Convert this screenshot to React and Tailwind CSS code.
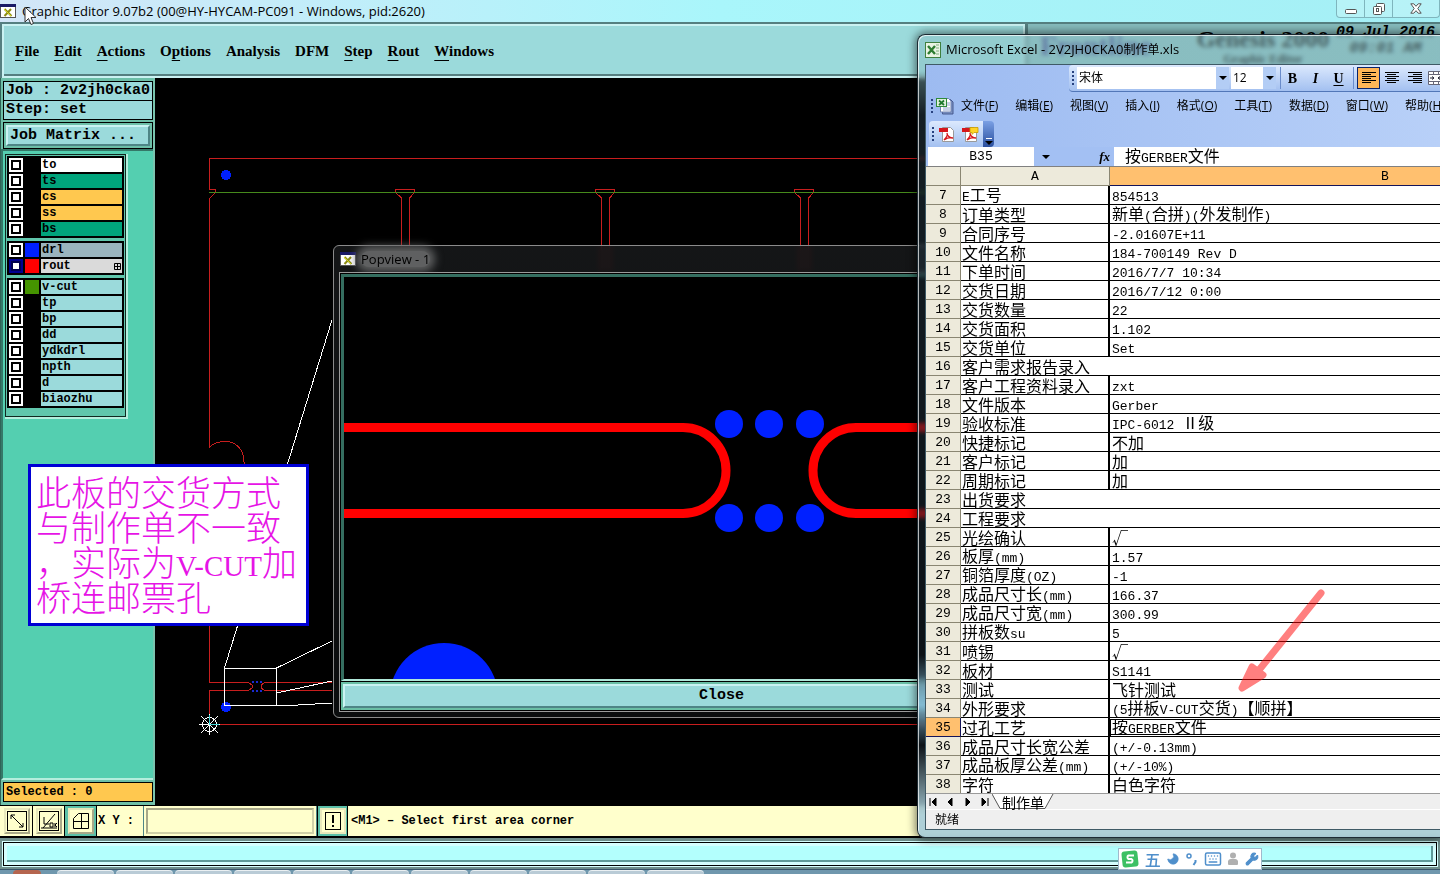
import React from 'react';
import { Moon, Wrench, Keyboard } from 'lucide-react';

const uiFont = "font-['Open_Sans','Noto_Sans_CJK_SC',sans-serif]";
const monoFont = "font-['Liberation_Mono',monospace]";
const sheetFont = "font-['Noto_Sans_CJK_SC',sans-serif]";

const menus = [
  ['', 'F', 'ile'],
  ['', 'E', 'dit'],
  ['', 'A', 'ctions'],
  ['O', 'p', 'tions'],
  ['Analysis', '', ''],
  ['DFM', '', ''],
  ['', 'S', 'tep'],
  ['', 'R', 'out'],
  ['', 'W', 'indows'],
];

const layerGroups = [
  [
    { name: 'to', bg: 'bg-white' },
    { name: 'ts', bg: 'bg-[#00a47c]' },
    { name: 'cs', bg: 'bg-[#ffc84f]' },
    { name: 'ss', bg: 'bg-[#ffc84f]' },
    { name: 'bs', bg: 'bg-[#00a47c]' },
  ],
  [
    { name: 'drl', bg: 'bg-[#9ab4be]', swatch: 'bg-[#0020ff]' },
    { name: 'rout', bg: 'bg-[#dadada]', swatch: 'bg-[#ff0000]', work: true },
  ],
  [
    { name: 'v-cut', bg: 'bg-[#9bdadb]', swatch: 'bg-[#459400]' },
    { name: 'tp', bg: 'bg-[#9bdadb]' },
    { name: 'bp', bg: 'bg-[#9bdadb]' },
    { name: 'dd', bg: 'bg-[#9bdadb]' },
    { name: 'ydkdrl', bg: 'bg-[#9bdadb]' },
    { name: 'npth', bg: 'bg-[#9bdadb]' },
    { name: 'd', bg: 'bg-[#9bdadb]' },
    { name: 'biaozhu', bg: 'bg-[#9bdadb]' },
  ],
];

const rows = [
  [7, 'E工号', '854513'],
  [8, '订单类型', '新单(合拼)(外发制作)'],
  [9, '合同序号', '-2.01607E+11'],
  [10, '文件名称', '184-700149 Rev D'],
  [11, '下单时间', '2016/7/7 10:34'],
  [12, '交货日期', '2016/7/12 0:00'],
  [13, '交货数量', '22'],
  [14, '交货面积', '1.102'],
  [15, '交货单位', 'Set'],
  [16, '客户需求报告录入', null],
  [17, '客户工程资料录入', 'zxt'],
  [18, '文件版本', 'Gerber'],
  [19, '验收标准', 'IPC-6012 Ⅱ级'],
  [20, '快捷标记', '不加'],
  [21, '客户标记', '加'],
  [22, '周期标记', '加'],
  [23, '出货要求', null],
  [24, '工程要求', null],
  [25, '光绘确认', '√'],
  [26, '板厚(mm)', '1.57'],
  [27, '铜箔厚度(OZ)', '-1'],
  [28, '成品尺寸长(mm)', '166.37'],
  [29, '成品尺寸宽(mm)', '300.99'],
  [30, '拼板数su', '5'],
  [31, '喷锡', '√'],
  [32, '板材', 'S1141'],
  [33, '测试', '飞针测试'],
  [34, '外形要求', '(5拼板V-CUT交货)【顺拼】'],
  [35, '过孔工艺', '按GERBER文件'],
  [36, '成品尺寸长宽公差', '(+/-0.13mm)'],
  [37, '成品板厚公差(mm)', '(+/-10%)'],
  [38, '字符', '白色字符'],
];

const excelMenus = [
  ['文件', 'F'],
  ['编辑', 'E'],
  ['视图', 'V'],
  ['插入', 'I'],
  ['格式', 'O'],
  ['工具', 'T'],
  ['数据', 'D'],
  ['窗口', 'W'],
  ['帮助', 'H'],
];

// Half-width runs get a Latin face at about half the width of a CJK glyph.
const Mixed = ({ text, latin = "font-['Liberation_Mono',monospace] text-[13px] leading-none" }) =>
  text.split(/([\x20-\x7e]+)/).map((part, i) =>
    /^[\x20-\x7e]+$/.test(part) ? <span key={i} className={latin}>{part}</span> : part
  );

const XIcon = () => (
  <svg width="16" height="14" viewBox="0 0 16 14" className="shrink-0" aria-hidden="true">
    <rect x="0.5" y="0.5" width="15" height="13" fill="#fff" stroke="#555" />
    <rect x="0" y="0" width="16" height="3" fill="#1a1a66" />
    <path d="M4.5 5 L11.5 12 M11 5 L4.5 12" stroke="#8c8c14" strokeWidth="2" />
    <path d="M4 5 L11 12" stroke="#d8d820" strokeWidth="1" />
  </svg>
);

const ExcelIcon = () => (
  <svg width="16" height="16" viewBox="0 0 16 16" className="shrink-0" aria-hidden="true">
    <rect x="0.5" y="0.5" width="15" height="15" fill="#e9f3e4" stroke="#3f7f3f" />
    <path d="M11 3h3M11 6h3M11 9h3M11 12h3" stroke="#7fae7f" />
    <path d="M3 4l7 8M10 4l-7 8" stroke="#2e7d32" strokeWidth="2.4" />
  </svg>
);

const WorkbookIcon = () => (
  <svg width="18" height="18" viewBox="0 0 18 18" className="shrink-0" aria-hidden="true">
    <path d="M6.5 2.500h8l2.500 2.500v12h-10.500z" fill="#7f95c4" stroke="#46598f" />
    <path d="M4.500 1.500h8l2.500 2.500v11h-10.500z" fill="#fff" stroke="#6a7fb0" />
    <path d="M11 6h3M11 8h3M7 11h7M7 13h7" stroke="#8fa3cf" />
    <rect x="0.500" y="1.500" width="10" height="8" fill="#dff0dc" stroke="#2f8a3a" />
    <path d="M3 3.500l5 4.500M8 3.500l-5 4.500" stroke="#1f7a2c" strokeWidth="1.700" />
  </svg>
);

const PdfIcon = ({ note }) => (
  <svg width="17" height="17" viewBox="0 0 17 17" className="shrink-0" aria-hidden="true">
    <path d="M3.5 1.5h8l3 3v11h-11z" fill="#fff" stroke="#999" />
    <rect x="0" y="2" width="9" height="4" fill="#d6161b" />
    <path d="M5 14c2-2 4-5 3-7 0 3 3 5 6 5-3-1-6 0-9 2z" fill="none" stroke="#d6161b" strokeWidth="1.3" />
    {note && <path d="M8 1.5h8v5h-4l-2 2v-2h-2z" fill="#ffd426" stroke="#c89b00" strokeWidth="0.8" />}
  </svg>
);

const Arrow = () => (
  <svg width="8" height="4" viewBox="0 0 8 4" aria-hidden="true">
    <path d="M0 0h8L4 4z" fill="#000" />
  </svg>
);

const Grip = () => (
  <svg width="3" height="16" viewBox="0 0 3 16" className="shrink-0" aria-hidden="true">
    <path d="M1 1v15" stroke="#27417f" strokeWidth="2" strokeDasharray="2 2" />
  </svg>
);

const AlignIcon = ({ side }) => {
  const x = { left: 0, center: 2, right: 5 }[side];
  return (
    <svg width="14" height="12" viewBox="0 0 14 12" aria-hidden="true">
      <path
        d={`M0 .5h14M${x} 2.5h9M0 4.5h14M${x} 6.5h9M0 8.5h14M${x} 10.5h9`}
        stroke="#000"
      />
    </svg>
  );
};

const TitleBar = () => (
  <header className={`flex h-[22px] shrink-0 items-start justify-between bg-linear-to-r from-[#d3e6f8] via-[#a9f6fb] to-[#a5eff5] ${uiFont}`}>
    <div className="flex items-center gap-[6px] pt-[2px] text-[13px] leading-[18px] text-black">
      <XIcon />
      <h1>Graphic Editor 9.07b2 (00@HY-HYCAM-PC091 - Windows, pid:2620)</h1>
    </div>
    <div className="flex h-[18px] rounded-b border border-t-0 border-[#7fb5bd] bg-white/20">
      <button aria-label="Minimize" className="flex w-7 items-center justify-center border-r border-[#7fb5bd]">
        <svg width="12" height="12" viewBox="0 0 12 12"><rect x="0.5" y="6.5" width="11" height="4" rx="1" fill="#fff" stroke="#555" /></svg>
      </button>
      <button aria-label="Restore" className="flex w-7 items-center justify-center border-r border-[#7fb5bd]">
        <svg width="12" height="12" viewBox="0 0 12 12" fill="#fff" stroke="#555">
          <rect x="3.5" y="0.5" width="8" height="8" rx="1" />
          <rect x="0.5" y="3.5" width="8" height="8" rx="1" />
          <rect x="3.5" y="5.5" width="2" height="3" />
        </svg>
      </button>
      <button aria-label="Close window" className="flex w-[46px] items-center justify-center">
        <svg width="12" height="11" viewBox="0 0 12 11"><path d="M.8.8h3L6 3.3 8.200.8h3L7.800 5.500l3.400 4.700h-3L6 7.700 3.800 10.200h-3L4.200 5.500z" fill="#fff" stroke="#555" /></svg>
      </button>
    </div>
  </header>
);

const MenuBar = () => (
  <div className="flex h-[56px] shrink-0 border-t-2 border-[#557f80] bg-[#557f80]">
    <nav className="ml-[2px] flex flex-1 items-center gap-[15px] border-2 border-[#caf2f2] bg-[#9bdadb] pl-[11px] font-['Liberation_Serif',serif] text-[15px] leading-5 font-bold text-black shadow-[inset_0_-2px_#557f80]">
      {menus.map(([pre, key, post]) => (
        <button key={pre + key + post} className="whitespace-nowrap">
          {pre}
          {key && <span className="underline underline-offset-4">{key}</span>}
          {post}
        </button>
      ))}
    </nav>
    <div className="ml-[3px] flex w-[412px] gap-1 bg-[#86bcbd] pl-3 font-['Liberation_Serif',serif] text-black">
      <span className="w-[150px] pt-[6px] text-[28px] leading-8 font-bold text-[#3b3f86]">Frontline</span>
      <div className="w-[138px] text-center">
        <div className="pt-[3px] text-[24px] leading-6 font-bold whitespace-nowrap">Genesis 2000</div>
        <div className="text-[12px] leading-4 font-bold">Graphic Editor</div>
      </div>
      <div className={`pt-px text-center text-[15px] leading-4 font-bold italic whitespace-nowrap ${monoFont}`}>
        <div>09 Jul 2016</div>
        <div>09:01 AM</div>
      </div>
    </div>
  </div>
);

const SidePanel = () => (
  <aside className={`flex w-[155px] shrink-0 flex-col border-r-2 border-l border-r-[#79c4ae] border-l-[#2f6457] bg-[#54cfb0] font-bold text-black ${monoFont}`}>
    <div className="border-l-2 border-[#6dbfa8] bg-[#6dbfa8] pt-[3px]">
      <div className="border border-black bg-[#9bdadb] pl-[2px] text-[15px] leading-[18px] whitespace-pre">Job : 2v2jh0cka0</div>
      <div className="border border-t-0 border-black bg-[#9bdadb] pl-[2px] text-[15px] leading-[18px] whitespace-pre">Step: set</div>
      <div className="mt-[2px] border border-black p-[2px]">
        <button className="block w-full border-2 border-t-[#caf2f2] border-r-[#4e8586] border-b-[#4e8586] border-l-[#caf2f2] bg-[#9bdadb] pl-[2px] text-left text-[15px] leading-[17px]">
          Job Matrix ...
        </button>
      </div>
    </div>
    <div className="flex-1 border-t-2 border-b-2 border-l-2 border-t-[#357868] border-b-[#b4eedd] border-l-[#357868] pt-[3px] pl-[2px]">
      <div className="flex h-[265px] w-[123px] flex-col gap-[3px] border-r-2 border-b-2 border-[#b4eedd] bg-[#60c6ac] p-[2px] shadow-[inset_1px_1px_#102820,inset_-1px_-1px_#102820]">
        {layerGroups.map((group) => (
          <div key={group[0].name} className="flex flex-col gap-[2px] bg-black p-[2px]">
            {group.map((layer) => (
              <div key={layer.name} className="flex h-[14px] gap-[2px]">
                <label className={`flex size-[14px] shrink-0 items-center justify-center ${layer.work ? 'bg-[#000090]' : 'bg-white'}`}>
                  <input
                    type="checkbox"
                    aria-label={`Show ${layer.name}`}
                    className={`size-[10px] appearance-none border-2 bg-white ${layer.work ? 'border-[#000050]' : 'border-black'}`}
                  />
                </label>
                <span className={`w-[14px] shrink-0 ${layer.swatch || 'bg-black'}`} />
                <span className={`flex flex-1 items-center justify-between pl-px text-[12px] leading-[14px] ${layer.bg}`}>
                  {layer.name}
                  {layer.work && (
                    <svg width="7" height="7" viewBox="0 0 7 7" className="mr-px" aria-hidden="true">
                      <path d="M.5.5h6v6h-6zM3.500 0v7M0 3.500h7" fill="none" stroke="#000" />
                    </svg>
                  )}
                </span>
              </div>
            ))}
          </div>
        ))}
      </div>
    </div>
    <div className="bg-[#6dbfa8] pt-[2px] pb-[3px] pl-[2px]">
      <div className="border border-black bg-[#ffc84f] pl-[2px] text-[12px] leading-[18px] whitespace-pre">Selected : 0</div>
    </div>
  </aside>
);

const posts = [405, 605, 804];

const BoardDrawing = () => (
  <svg width="1285" height="727" viewBox="155 78 1285 727" className="block shrink-0" shapeRendering="crispEdges" fill="none" aria-label="Board outline">
    <g stroke="#c81e1e" strokeWidth="1">
      <path d="M1440 158.500H209.500V189.500H215L216 192L209.500 198.500V447C214 443 219 441.500 225 441.500A18 18 0 0 1 243.500 460.500A18 18 0 0 1 209.500 474V682.500H248L252 685V688L248 690.500H209.500V724.500H1440" />
      <path d="M332 682.500H265L261 685V688L265 690.500H332" />
      {posts.map((x) => (
        <path
          key={x}
          transform={`translate(${x} 0)`}
          d="M-9.500 192.500V189.500H9.500V192.500L4.500 198V272M-9.500 192.500L-3.500 198V272"
        />
      ))}
    </g>
    <path d="M209 192.500H1440" stroke="#468a1c" />
    <circle cx="226" cy="175" r="5" fill="#0020ff" />
    <circle cx="226" cy="707" r="5" fill="#0020ff" />
    <path d="M252 682h2M256 682h2M260 682h2M252 691h2M256 691h2M260 691h2" stroke="#1a2ad0" strokeWidth="2" />
    <g stroke="#fff">
      <path d="M224.500 668.500H276.500V705.500H224.500z" />
      <path d="M224.500 668L332 320M276.500 668L332 641M276.500 693L332 681M276.500 705.500H290L332 703" />
      <circle cx="209.500" cy="724.500" r="7" />
      <path d="M199 724.500H220M209.500 714V735M201 716L218 733M218 716L201 733" />
    </g>
    <path d="M209.500 715V724.500H219" stroke="#3fd0d0" />
  </svg>
);

const Popview = () => (
  <section className="absolute top-[245px] left-[333px] flex w-[777px] flex-col rounded-md border border-[#8b8b8b] bg-linear-to-b from-[#1d1f21]/70 to-[#0c0e0f]/90 px-[5px] pb-[5px] backdrop-blur-[3px]">
    <header className={`flex h-[26px] items-center gap-[5px] pl-px text-[13px] leading-4 text-black ${uiFont}`}>
      <XIcon />
      <h2 className="rounded-full bg-[#5f6061] shadow-[0_0_8px_5px_#5f6061]">Popview - 1</h2>
    </header>
    <div className="flex flex-col border border-[#9b9b9b] bg-black p-px">
      <div className="overflow-hidden border-[3px] border-t-[#356e60] border-r-black border-b-[2px] border-b-[#b0e8da] border-l-[#356e60]">
        <svg width="760" height="402" viewBox="344 277 760 402" className="block" fill="none" aria-label="Zoomed outline">
          <g stroke="#ff0000" strokeWidth="9">
            <path d="M344 427.500H683A43 43 0 0 1 683 513.500H344" />
            <path d="M1104 427.500H856A43 43 0 0 0 856 513.500H1104" />
          </g>
          <g fill="#0020ff">
            {[729, 769, 810].map((x) => (
              <React.Fragment key={x}>
                <circle cx={x} cy="424" r="14" />
                <circle cx={x} cy="518" r="14" />
              </React.Fragment>
            ))}
            <circle cx="444" cy="697" r="54" />
          </g>
        </svg>
      </div>
      <div className="mt-px border-2 border-[#6abfa5]">
        <button className={`block w-full border-2 border-t-[#caf2f2] border-r-[#4e8586] border-b-[#4e8586] border-l-[#caf2f2] bg-[#9bdadb] text-center text-[15px] leading-[20px] font-bold text-black ${monoFont}`}>
          Close
        </button>
      </div>
    </div>
  </section>
);

const toolIcons = [
  <path key="a" d="M4 4l12 12M4 4h4M4 4v4M16 16h-4M16 16v-4" />,
  <path key="b" d="M16 3L4 17M5 6v7h5M11 12h3v4h-3zM16 12v4M18 12l-2 2 2 2M2 17h16" />,
  <path key="c" d="M2.500 7.500l5-5h10v15h-15zM10.500 2.500v15M2.500 10.500h15" />,
];

const PromptBar = () => (
  <div className={`flex h-[33px] shrink-0 items-stretch border-t border-b-2 border-black bg-[#ffffcc] pl-px text-[12px] leading-4 font-bold text-black ${monoFont}`}>
    {['Zoom area', 'Measure', 'Grid'].map((label, i) => (
      <button
        key={label}
        aria-label={label}
        className={`flex w-8 items-center justify-center border-r border-black p-[2px] ${i === 2 ? 'bg-[#5cc0a8]' : ''}`}
      >
        <span className="flex size-[26px] items-center justify-center border-2 border-t-[#e8e8bb] border-r-[#a8a888] border-b-[#a8a888] border-l-[#e8e8bb] bg-[#ffffcc]">
          <svg width="20" height="20" viewBox="0 0 20 20" fill="none" stroke="#000">
            {i < 2 && <rect x="0.500" y="0.500" width="19" height="19" />}
            {toolIcons[i]}
          </svg>
        </span>
      </button>
    ))}
    <label htmlFor="xy" className="flex w-[46px] items-center pl-px whitespace-pre">X Y :</label>
    <div className="border-x border-[#4e8586] p-[2px]">
      <input id="xy" className="h-full w-[168px] border-2 border-t-[#a8a888] border-r-[#d0d0a8] border-b-[#d0d0a8] border-l-[#a8a888] bg-[#ffffcc] px-1" />
    </div>
    <button aria-label="Stop" className="flex w-[31px] items-center justify-center border-r border-l border-black bg-[#5cc0a8]">
      <span className="flex size-[26px] items-center justify-center border-2 border-[#e8e8bb] bg-[#ffffcc]">
        <svg width="16" height="18" viewBox="0 0 16 18" fill="none" stroke="#000">
          <rect x="0.500" y="0.500" width="15" height="17" />
          <path d="M8 3v8M8 13v2" strokeWidth="2" />
        </svg>
      </span>
    </button>
    <p className="flex items-center pl-[3px] whitespace-pre">{'<M1> – Select first area corner'}</p>
  </div>
);

const Taskbar = () => (
  <footer className="flex h-[5px] shrink-0 items-end gap-[2px] overflow-hidden border-t border-[#39566b] bg-[#6f97ad] pl-[13px]">
    <span className="mr-[14px] h-full w-7 rounded-t-full bg-[#b5654f]" />
    {[0, 1, 2, 3, 4, 5, 6, 7, 8, 9, 10].map((i) => (
      <span key={i} className="h-full w-[57px] rounded-t-sm border-t border-white/70 bg-[#b9cbd6]" />
    ))}
  </footer>
);

const ImeBar = () => (
  <div className="absolute top-[848px] left-[1118px] flex h-[22px] w-[144px] items-center justify-between border border-[#9fb9cc] bg-white px-[2px] text-[#4f8fcb]">
    <svg width="18" height="18" viewBox="0 0 18 18" aria-label="Sogou">
      <rect x="1" y="1" width="16" height="16" rx="3" fill="#3cc063" transform="rotate(-6 9 9)" />
      <path d="M13 5.500H7.500a2 2 0 0 0 0 3.500h3a2 2 0 0 1 0 3.500H5" fill="none" stroke="#fff" strokeWidth="2" />
    </svg>
    <span className={`text-[16px] leading-4 font-medium ${sheetFont}`}>五</span>
    <Moon className="size-[14px] -scale-x-100 fill-current" strokeWidth={1} />
    <svg width="12" height="14" viewBox="0 0 12 14" fill="none" stroke="currentColor" strokeWidth="1.500" aria-hidden="true">
      <circle cx="3" cy="4" r="2" />
      <path d="M9.500 8v2l-2 3" strokeWidth="2" />
    </svg>
    <Keyboard className="size-[18px]" />
    <svg width="12" height="14" viewBox="0 0 12 14" fill="#b0b0b0" aria-hidden="true">
      <circle cx="6" cy="3.500" r="3" />
      <path d="M1 9a3 3 0 0 1 3-2h4a3 3 0 0 1 3 2v3a1 1 0 0 1-1 1H2a1 1 0 0 1-1-1z" />
    </svg>
    <Wrench className="size-[14px] fill-current" />
  </div>
);

const ExcelToolbars = () => (
  <div className={`bg-linear-to-r from-[#9dbbf1] to-[#b8d0f8] text-[12px] text-black ${uiFont}`}>
    <div className="flex h-[28px]">
      <div className="ml-[143px] flex h-[27px] flex-1 items-center rounded-l border-b border-[#5277b8] bg-linear-to-b from-[#dce9fd] to-[#a3c0f0] pl-[3px]">
        <Grip />
        <div className="relative ml-[2px] flex h-[22px] w-[152px] items-center bg-white">
          <select aria-label="Font" className="h-full w-full appearance-none pl-[2px] text-[12px]">
            <option>宋体</option>
          </select>
          <span className="pointer-events-none absolute right-0 flex h-full w-[13px] items-center justify-center bg-[#b3cdf5]"><Arrow /></span>
        </div>
        <div className="relative ml-[2px] flex h-[22px] w-[45px] items-center bg-white">
          <select aria-label="Font size" className="h-full w-full appearance-none pl-[2px] text-[12px]">
            <option>12</option>
          </select>
          <span className="pointer-events-none absolute right-0 flex h-full w-[13px] items-center justify-center bg-[#b3cdf5]"><Arrow /></span>
        </div>
        <div className="ml-1 flex h-[22px] items-center border-l border-[#6a8ccb] font-['Liberation_Serif',serif] text-[14px] font-bold">
          <button className="w-[23px]">B</button>
          <button className="w-[23px] italic">I</button>
          <button className="w-[23px] underline underline-offset-2">U</button>
        </div>
        <div className="ml-[3px] flex h-[22px] items-center border-l border-[#6a8ccb] pl-[3px]">
          {['left', 'center', 'right'].map((side) => (
            <button
              key={side}
              aria-label={`Align ${side}`}
              className={`flex h-[22px] w-[23px] shrink-0 items-center justify-center border ${side === 'left' ? 'border-[#0a246a] bg-[#ffb657]' : 'border-transparent'}`}
            >
              <AlignIcon side={side} />
            </button>
          ))}
          <button aria-label="Merge and center" className="ml-[2px] shrink-0">
            <svg width="16" height="14" viewBox="0 0 16 14" aria-hidden="true">
              <path d="M.5.5h15v13H.5zM.5 3.500h15M.5 10.500h15M5.500.5v3M10.500.5v3M5.500 10.500v3M10.500 10.500v3" fill="#fff" stroke="#667" />
              <path d="M2 7h4M14 7h-4M4 5.500L6 7 4 8.500M12 5.500L10 7l2 1.500" fill="none" stroke="#223" />
            </svg>
          </button>
        </div>
      </div>
    </div>
    <nav className="flex h-[26px] items-center overflow-hidden pl-[5px]">
      <Grip />
      <span className="mr-[7px] ml-[2px] flex"><WorkbookIcon /></span>
      <div className="flex gap-[17px]">
        {excelMenus.map(([label, key]) => (
          <button key={key} className="shrink-0 whitespace-nowrap">
            {label}(<u>{key}</u>)
          </button>
        ))}
      </div>
    </nav>
    <div className="flex h-[28px] pt-[2px] pl-[3px]">
      <div className="flex w-[54px] items-center gap-[4px] rounded-l bg-linear-to-b from-[#dce9fd] to-[#a3c0f0] pl-[3px]">
        <Grip />
        <PdfIcon />
        <span className="ml-[2px] flex"><PdfIcon note /></span>
      </div>
      <button aria-label="Toolbar options" className="flex w-[11px] flex-col items-center justify-end gap-[2px] rounded-r bg-linear-to-b from-[#7ba0e4] to-[#2a4f9e] pb-[2px]">
        <span className="h-px w-[6px] bg-white" />
        <Arrow />
      </button>
    </div>
    <div className={`flex h-[19px] items-stretch bg-[#a3c0f3] pl-[2px] text-[16px] ${sheetFont}`}>
      <input aria-label="Name box" defaultValue="B35" className="w-[106px] bg-white text-center font-['Liberation_Mono',monospace] text-[13px]" />
      <button aria-label="Names" className="flex w-4 items-center justify-end"><Arrow /></button>
      <span className="flex flex-1 items-center justify-end pr-[4px] font-['Liberation_Serif',serif] text-[13px] font-bold italic">fx</span>
      <div className="w-[326px] bg-white pl-[11px] leading-4 whitespace-pre"><Mixed text="按GERBER文件" /></div>
    </div>
  </div>
);

const Sheet = () => (
  <div className="h-[627px] overflow-hidden border-t border-[#808080] bg-white">
    <table className={`w-[734px] table-fixed border-separate border-spacing-0 text-[16px] leading-4 whitespace-pre text-black ${sheetFont}`}>
      <colgroup>
        <col className="w-[35px]" />
        <col className="w-[149px]" />
        <col />
      </colgroup>
      <thead>
        <tr className="h-[19px] font-['Liberation_Mono',monospace] text-[13px]">
          <th className="border-r border-b border-[#8a8672] bg-[#edeadb]" />
          <th className="border-r border-b border-[#8a8672] bg-[#edeadb] p-0 pt-[2px] font-normal">A</th>
          <th className="border-b border-[#14145a] bg-[#ffc06f] p-0 pt-[2px] font-normal">B</th>
        </tr>
      </thead>
      <tbody>
        {rows.map(([n, a, b]) => (
          <tr key={n} className="h-[19px]">
            <th className={`border-r border-b p-0 pt-[2px] text-center font-['Liberation_Mono',monospace] text-[13px] font-normal ${n === 35 ? 'border-[#14145a] bg-[#ffc06f]' : 'border-[#8a8672] bg-[#edeadb]'}`}>
              {n}
            </th>
            {b === null ? (
              <td colSpan={2} className="border-b border-black p-0 pl-px"><Mixed text={a} /></td>
            ) : (
              <>
                <td className="border-r-2 border-b border-black p-0 pl-px"><Mixed text={a} /></td>
                <td className={`border-b border-black p-0 pl-[2px] ${n === 35 ? 'shadow-[inset_0_1px_#fff,inset_0_2px_#000,inset_1px_0_#000,inset_0_-1px_#fff,inset_0_-2px_#000]' : ''}`}>
                  <Mixed text={b} />
                </td>
              </>
            )}
          </tr>
        ))}
      </tbody>
    </table>
  </div>
);

const ExcelWindow = () => (
  <section className="absolute top-[34px] right-0 left-[917px] flex flex-col overflow-hidden rounded-l-lg border border-r-0 border-[#1d2b33] bg-[linear-gradient(to_bottom,rgba(140,190,196,0.5)_0,rgba(140,190,196,0.5)_36px,rgba(40,60,72,0.5)_80px,rgba(20,30,38,0.6)_620px,rgba(130,185,210,0.9)_670px,rgba(20,30,38,0.6)_710px,rgba(170,205,215,0.95)_780px)] pb-[7px] pl-[7px] shadow-[0_0_8px_2px_rgba(0,0,0,0.5),inset_1px_1px_rgba(255,255,255,0.7)] backdrop-blur-[2px]">
    <header className={`flex h-[29px] items-center gap-[5px] text-[13px] leading-4 text-black ${uiFont}`}>
      <ExcelIcon />
      <h2 className="whitespace-nowrap">
        Microsoft Excel - 2V2JH0CKA0<span className="text-[12px]">制作单</span>.xls
      </h2>
    </header>
    <div className="overflow-hidden border border-r-0 border-[#3f5a66]">
      <ExcelToolbars />
      <Sheet />
      <div className="flex h-[16px] items-stretch border-t border-[#9a9a9a] bg-[#efefef]">
        <div className="flex w-[66px] items-center justify-between px-[3px]">
          {['M1 0v8M7 0v8L3 4z', 'M6 0v8L2 4z', 'M2 0v8l4-4z', 'M1 0v8l4-4zM7 0v8'].map((d) => (
            <button key={d} aria-label="Scroll sheets">
              <svg width="8" height="8" viewBox="0 0 8 8" fill="#000" stroke="#000" strokeWidth="1"><path d={d} /></svg>
            </button>
          ))}
        </div>
        <button className={`relative h-[16px] w-[62px] text-[14px] leading-[12px] text-black ${sheetFont}`}>
          <svg width="62" height="16" viewBox="0 0 62 16" className="absolute inset-0" aria-hidden="true">
            <path d="M0 0l8 14.500h45L61 0" fill="#fff" stroke="#555" />
          </svg>
          <span className="relative">制作单</span>
        </button>
      </div>
      <div className={`flex h-[20px] items-center border-t border-white bg-[#efefef] pl-[9px] text-[12px] text-black ${uiFont}`}>就绪</div>
    </div>
  </section>
);

const Cursor = () => (
  <svg width="13" height="20" viewBox="0 0 13 20" className="absolute top-[6px] left-[24px]" aria-hidden="true">
    <path d="M1 1v15l3.500-3.500L7 18.500l2.500-1L7 11.500h5z" fill="#fff" stroke="#333" />
  </svg>
);

const App = () => (
  <main className="relative flex h-screen flex-col overflow-hidden bg-black">
    <TitleBar />
    <MenuBar />
    <div className="flex min-h-0 flex-1">
      <SidePanel />
      <div className="min-w-0 flex-1 overflow-hidden bg-black">
        <BoardDrawing />
      </div>
    </div>
    <PromptBar />
    <div className="h-[31px] shrink-0 border-2 border-t-[3px] border-[#6f8f8c] bg-[#d5fefe] p-px">
      <div className="h-full border border-black p-[3px]">
        <div className="h-full border-r-2 border-b-2 border-[#5f9a99] bg-[#b3fffd]" />
      </div>
    </div>
    <Taskbar />

    <Popview />
    <p className={`absolute top-[464px] left-[28px] w-[281px] border-[3px] border-[#0000d4] bg-white px-[5px] pt-[6px] pb-[10px] text-[35px] leading-[35px] font-light whitespace-pre text-[#e614e6] ${sheetFont}`}>
      {['此板的交货方式', '与制作单不一致', '，实际为V-CUT加', '桥连邮票孔'].map((line) => (
        <span key={line} className="block h-[35px]">
          <Mixed text={line} latin="font-['Liberation_Serif',serif] text-[29px] leading-none" />
        </span>
      ))}
    </p>
    <ExcelWindow />
    <svg width="90" height="110" viewBox="1236 586 90 110" className="absolute top-[586px] left-[1236px]" aria-hidden="true">
      <g fill="#f00" stroke="#f00" strokeWidth="7" strokeLinejoin="round" strokeLinecap="round" opacity="0.5">
        <path d="M1321 593L1255 675" />
        <path d="M1242 688L1252 667L1263 675z" />
      </g>
    </svg>
    <ImeBar />
    <Cursor />
  </main>
);

export default App;
